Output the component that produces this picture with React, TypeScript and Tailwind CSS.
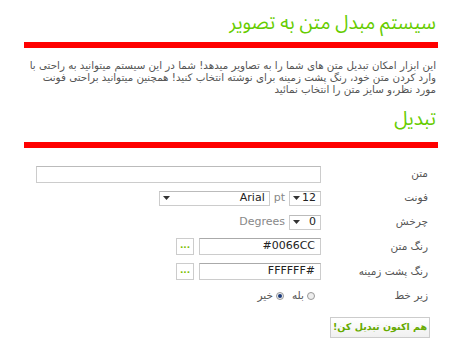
import React from 'react';

const fa = { fontFamily: 'Tahoma, "DejaVu Sans", sans-serif' };
const head = { fontFamily: '"Noto Sans Arabic", "Noto Naskh Arabic", "DejaVu Sans", sans-serif' };
const latin = { fontFamily: '"DejaVu Sans", sans-serif' };

const Caret = () => (
    <svg width="7" height="4" viewBox="0 0 7 4" className="shrink-0">
        <path d="M0 0h7L3.5 4z" fill="#333" />
    </svg>
);

const FakeSelect = ({ value, width }: { value: string; width: string }) => (
    <div className={`${width} h-[15px] border border-[#ccc] border-t-[#bbb] bg-white flex items-center justify-between pr-[4px] pl-[3px] text-[11px] text-[#222]`} style={latin}>
        <span>{value}</span>
        <Caret />
    </div>
);

const Row = ({ label, children, h }: { label: string; children?: React.ReactNode; h: string }) => (
    <div className={`flex items-center ${h}`}>
        <div className="w-[117px] pr-[10px] text-[10.5px] text-[#555] shrink-0" style={fa}>{label}</div>
        <div className="flex items-center">{children}</div>
    </div>
);

const ColorField = ({ value }: { value: string }) => (
    <div className="flex items-center gap-[5px]">
        <div className="w-[122px] h-[17px] border border-[#ccc] border-t-[#aaa] bg-white flex items-center px-[5px] text-[11px] text-[#222]" style={latin}>
            <span dir="ltr">{value}</span>
        </div>
        <div className="w-[18px] h-[17px] border border-[#ccc] bg-white flex items-center justify-center text-[9px] text-[#7cc000] font-bold leading-none pb-[3px]">...</div>
    </div>
);

const Radio = ({ checked }: { checked?: boolean }) => (
    <span className="w-[8px] h-[8px] rounded-full border border-[#999] bg-[#eee] flex items-center justify-center">
        {checked && <span className="w-[4px] h-[4px] rounded-full bg-[#1a3a7a]" />}
    </span>
);

const App: React.FC = () => {
    return (
        <div dir="rtl" className="w-[450px] h-[350px] bg-white overflow-hidden pl-[24px] pr-[12px]" style={fa}>
            <h1 className="text-[#66cc00] text-[19px] leading-[26px] pt-[10px] pr-[2px] font-normal" style={head}>سیستم مبدل متن به تصویر</h1>
            <div className="h-[6px] bg-[#ff0000] mt-[6px]" />
            <p className="text-[10.3px] leading-[12px] text-[#555] mt-[11px] pr-[2px]" style={fa}>
                این ابزار امکان تبدیل متن های شما را به تصاویر میدهد! شما در این سیستم میتوانید به راحتی با وارد کردن متن خود، رنگ پشت زمینه برای نوشته انتخاب کنید! همچنین میتوانید براحتی فونت مورد نظر،و سایز متن را انتخاب نمائید
            </p>
            <h2 className="text-[#66cc00] text-[19px] leading-[26px] mt-[11px] pr-[2px] font-normal" style={head}>تبدیل</h2>
            <div className="h-[6px] bg-[#ff0000] mt-[10px]" />

            <div className="flex flex-col mt-[14px]">
                <Row label="متن" h="h-[24px]">
                    <div className="w-[285px] h-[17px] border border-[#ccc] border-t-[#bbb] bg-white" />
                </Row>
                <Row label="فونت" h="h-[24px]">
                    <FakeSelect value="12" width="w-[32px]" />
                    <span className="text-[11px] text-[#888] mx-[4px]" style={latin}>pt</span>
                    <FakeSelect value="Arial" width="w-[111px]" />
                </Row>
                <Row label="چرخش" h="h-[24px]">
                    <FakeSelect value="0" width="w-[32px]" />
                    <span className="text-[11px] text-[#888] mr-[4px]" style={latin}>Degrees</span>
                </Row>
                <Row label="رنگ متن" h="h-[25px]">
                    <ColorField value="#0066CC" />
                </Row>
                <Row label="رنگ پشت زمینه" h="h-[25px]">
                    <ColorField value="FFFFFF#" />
                </Row>
                <Row label="زیر خط" h="h-[24px]">
                    <div className="flex items-center gap-[3px] text-[10.5px] text-[#555] pr-[6px]" style={fa}>
                        <Radio />
                        <span>بله</span>
                        <span className="w-[2px]" />
                        <Radio checked />
                        <span>خیر</span>
                    </div>
                </Row>
                <div className="flex pr-[8px] mt-[9px]">
                    <button className="w-[100px] h-[21px] border border-[#ccc] bg-gradient-to-b from-white to-[#f0f0f0] text-[9.5px] font-bold text-[#66aa00] whitespace-nowrap" style={fa}>هم اکنون تبدیل کن!</button>
                </div>
            </div>
        </div>
    );
};

export default App;
